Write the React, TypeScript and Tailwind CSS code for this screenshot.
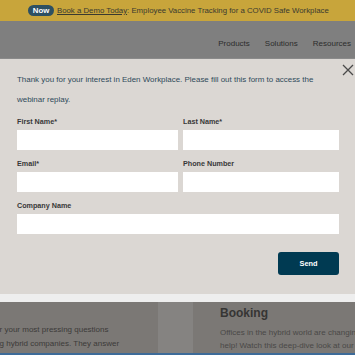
import React from 'react';

const fields = [
  { label: 'First Name*', wide: false },
  { label: 'Last Name*', wide: false },
  { label: 'Email*', wide: false },
  { label: 'Phone Number', wide: false },
  { label: 'Company Name', wide: true },
];

const App: React.FC = () => {
  return (
    <div className="w-[355px] h-[355px] overflow-hidden bg-[#7b7875] font-['Liberation_Sans',Arial,sans-serif]">
      {/* Announcement bar (dimmed by overlay) */}
      <div className="h-[21px] bg-[#c8a53b] flex items-center pl-[28px] text-[7.8px] text-[#3a3a30]">
        <span className="h-[11px] w-[26px] rounded-full bg-[#2d5062] text-white font-bold flex items-center justify-center mr-[3px]">
          Now
        </span>
        <span className="underline">Book a Demo Today</span>
        <span>: Employee Vaccine Tracking for a COVID Safe Workplace</span>
      </div>

      {/* Nav */}
      <div className="h-[38px] bg-[#7f7f7f] border-b border-[#8a8a8a] flex items-center justify-end gap-x-[15px] pr-[4px] pt-[8px] text-[8px] text-[#2c2c2c]">
        <span>Products</span>
        <span>Solutions</span>
        <span>Resources</span>
      </div>

      {/* Modal */}
      <div className="relative bg-[#dbd7d3] pt-[11px] pb-[19px] pl-[17px] pr-[16px]">
        <button className="absolute top-[5px] right-[1px] w-[12px] h-[12px] text-[#4a4a4a]">
          <svg viewBox="0 0 12 12" className="w-[12px] h-[12px]" fill="none" stroke="currentColor" strokeWidth="1.3">
            <path d="M1 1 L11 11 M11 1 L1 11" />
          </svg>
        </button>
        <p className="text-[7.95px] leading-[20px] text-[#2f4a5a] pr-[16px]">
          Thank you for your interest in Eden Workplace. Please fill out this form to access the webinar replay.
        </p>
        <div className="mt-[6px] grid grid-cols-[161px_156px] gap-x-[5px] gap-y-[8px]">
          {fields.map((f) => (
            <div key={f.label} className={f.wide ? 'col-span-2' : ''}>
              <div className="h-[12px] leading-[12px] mb-[2px] text-[7.2px] font-bold text-[#383838]">{f.label}</div>
              <div className="h-[20px] bg-white" />
            </div>
          ))}
        </div>
        <div className="mt-[18px] flex justify-end">
          <button className="w-[61px] h-[23px] rounded-[3px] bg-[#003a52] text-white text-[7.4px] font-bold">
            Send
          </button>
        </div>
      </div>

      {/* Light strip */}
      <div className="h-[8px] bg-[#eeeeee]" />

      {/* Page content behind */}
      <div className="flex h-[51px]">
        <div className="w-[158px] overflow-hidden pt-[21px]">
          <div className="ml-[-40px] w-[220px] text-[8px] leading-[14px] text-[#3b3a39]">
            <div>Answers for your most pressing questions</div>
            <div>from leading hybrid companies. They answer</div>
            <div>how a hybrid office layout is different than a</div>
          </div>
        </div>
        <div className="w-[35px] bg-[#858381]" />
        <div className="flex-1 pl-[27px] overflow-hidden">
          <div className="text-[12px] font-bold leading-[16px] mt-[3px] text-[#363534]">Booking</div>
          <div className="mt-[5px] w-[200px] text-[8px] leading-[13px] text-[#4a4847]">
            <div>Offices in the hybrid world are changing</div>
            <div>help! Watch this deep-dive look at our</div>
          </div>
        </div>
      </div>
      <div className="h-[2px] bg-[#3d6b99]" />
    </div>
  );
};

export default App;
